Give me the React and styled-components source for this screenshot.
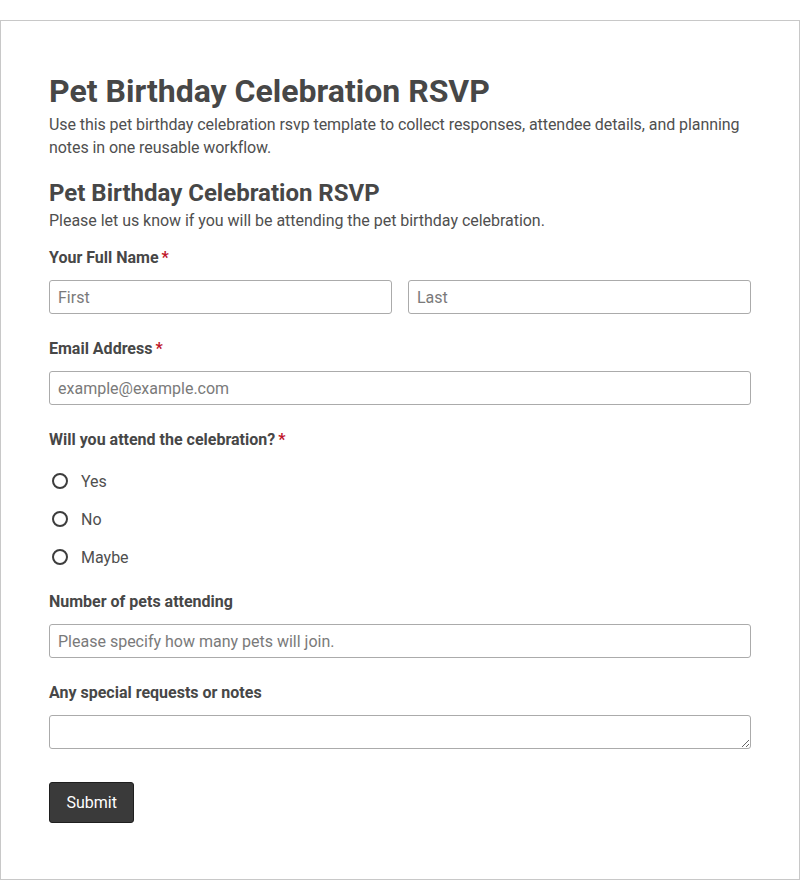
import styled, { createGlobalStyle } from 'styled-components'

const GlobalStyle = createGlobalStyle`
  body {
    margin: 0;
    padding-top: 20px;
    background: #fff;
    font-family: Roboto, "Liberation Sans", sans-serif;
    color: #4a4a4a;
  }
  * { box-sizing: border-box; }
`

const Card = styled.div`
  border: 1px solid #c8c8c8;
  padding: 51px 48px 56px;
  min-height: 860px;
`

const Title = styled.h1`
  font-size: 32px;
  font-weight: 700;
  line-height: 38px;
  margin: 0;
  color: #474747;
`

const Intro = styled.p`
  font-size: 16px;
  line-height: 23px;
  letter-spacing: -0.07px;
  margin: 3px 0 19px;
  color: #4f4f4f;
`

const SectionTitle = styled.h2`
  font-size: 24px;
  font-weight: 700;
  line-height: 30px;
  margin: 0;
  color: #474747;
`

const Subtitle = styled.p`
  font-size: 16px;
  line-height: 22px;
  letter-spacing: -0.03px;
  margin: 2px 0 16px;
  color: #4f4f4f;
`

const Field = styled.div`
  margin-bottom: ${p => p.$gap || 25}px;
`

const Label = styled.label`
  display: block;
  font-size: 16px;
  font-weight: 700;
  line-height: 20px;
  margin-bottom: 12px;
  color: #474747;
`

const Req = styled.span`
  color: #c0152a;
  margin-left: 3px;
`

const Row = styled.div`
  display: grid;
  grid-template-columns: 1fr 1fr;
  gap: 16px;
`

const Input = styled.input`
  display: block;
  width: 100%;
  height: 34px;
  padding: 0 8px;
  border: 1px solid #ababab;
  border-radius: 3px;
  font-family: inherit;
  font-size: 16px;
  color: #4a4a4a;
  background: #fff;
  &::placeholder { color: #7a7a7a; }
`

const TextArea = styled.textarea`
  display: block;
  width: 100%;
  height: 34px;
  padding: 6px 8px;
  border: 1px solid #ababab;
  border-radius: 3px;
  font-family: inherit;
  font-size: 16px;
  resize: vertical;
`

const Options = styled.div`
  display: flex;
  flex-direction: column;
`

const Option = styled.label`
  display: flex;
  align-items: center;
  gap: 13px;
  height: 38px;
  font-size: 16px;
  color: #4f4f4f;
  padding-left: 3px;
`

const Radio = styled.input`
  appearance: none;
  width: 16px;
  height: 16px;
  margin: 0;
  border: 2px solid #3d3d3d;
  border-radius: 50%;
  background: #fff;
`

const Submit = styled.button`
  height: 41px;
  padding: 0 16.5px;
  background: #3a3a3a;
  border: 1px solid #1f1f1f;
  border-radius: 3px;
  color: #fff;
  font-family: inherit;
  font-size: 16px;
  margin-top: 8px;
`

export default function App() {
  return (
    <>
      <GlobalStyle />
      <Card>
        <Title>Pet Birthday Celebration RSVP</Title>
        <Intro>
          Use this pet birthday celebration rsvp template to collect responses, attendee details, and planning notes in one reusable workflow.
        </Intro>
        <SectionTitle>Pet Birthday Celebration RSVP</SectionTitle>
        <Subtitle>Please let us know if you will be attending the pet birthday celebration.</Subtitle>

        <Field>
          <Label>Your Full Name<Req>*</Req></Label>
          <Row>
            <Input placeholder="First" />
            <Input placeholder="Last" />
          </Row>
        </Field>

        <Field>
          <Label>Email Address<Req>*</Req></Label>
          <Input type="email" placeholder="example@example.com" />
        </Field>

        <Field $gap={16}>
          <Label>Will you attend the celebration?<Req>*</Req></Label>
          <Options>
            {['Yes', 'No', 'Maybe'].map(o => (
              <Option key={o}>
                <Radio type="radio" name="attend" value={o} />
                {o}
              </Option>
            ))}
          </Options>
        </Field>

        <Field>
          <Label>Number of pets attending</Label>
          <Input placeholder="Please specify how many pets will join." />
        </Field>

        <Field>
          <Label>Any special requests or notes</Label>
          <TextArea />
        </Field>

        <Submit>Submit</Submit>
      </Card>
    </>
  )
}
